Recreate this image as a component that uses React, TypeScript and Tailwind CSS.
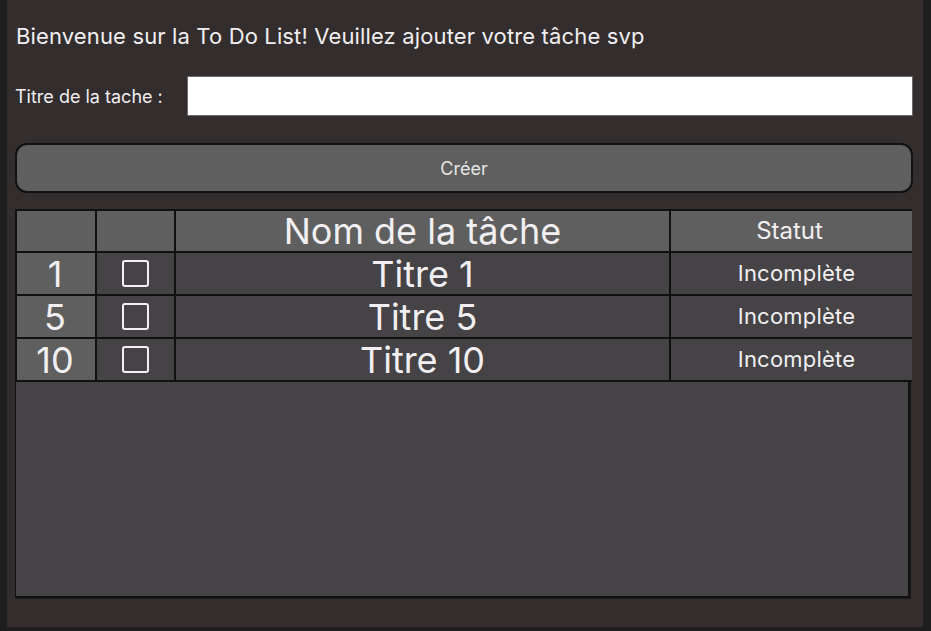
import { useState } from 'react';

type Task = { id: number; title: string; done: boolean };

const initialTasks: Task[] = [
  { id: 1, title: 'Titre 1', done: false },
  { id: 5, title: 'Titre 5', done: false },
  { id: 10, title: 'Titre 10', done: false },
];

export default function App() {
  const [title, setTitle] = useState('');
  const [tasks, setTasks] = useState<Task[]>(initialTasks);

  const toggle = (id: number) =>
    setTasks((prev) => prev.map((t) => (t.id === id ? { ...t, done: !t.done } : t)));

  return (
    <div className="w-[931px] h-[631px] bg-[#1e1e1e] pl-[7px] pr-[8px] pb-[4px] font-['Inter',sans-serif] text-[#f1eff1]">
      <div className="h-full bg-[#332d2d] pl-[8px] pr-[10px] flex flex-col">
        {/* heading */}
        <h1 className="mt-[22px] h-7 leading-7 text-[22px] tracking-[0.14px] pl-[1px]">
          Bienvenue sur la To Do List! Veuillez ajouter votre tâche svp
        </h1>

        {/* title input */}
        <div className="mt-[26px] flex items-center h-10">
          <label className="w-[172px] text-[18px]">Titre de la tache :</label>
          <input
            value={title}
            onChange={(e) => setTitle(e.target.value)}
            className="flex-1 h-10 bg-white border border-[#6a6a6a] text-black px-2 outline-none"
          />
        </div>

        {/* create button */}
        <button className="mt-[27px] h-[50px] rounded-[12px] bg-[#5f5f5f] border-2 border-[#111] text-[18px] text-[#e6e6e6]">
          Créer
        </button>

        {/* task list */}
        <div className="mt-4 h-[389px] w-[895px] bg-[#464446] border-l border-r-2 border-b-2 border-[#111] shadow-[1px_1px_0_#1a1a1a]">
          <div className="-ml-px w-[897px] bg-[#111] grid grid-cols-[78px_77px_493px_241px] gap-[2px] p-[2px]">
            <div className="h-[40px] bg-[#5f5f5f]" />
            <div className="h-[40px] bg-[#5f5f5f]" />
            <div className="h-[40px] bg-[#5f5f5f] flex items-center justify-center text-[36px]">
              Nom de la tâche
            </div>
            <div className="h-[40px] bg-[#5f5f5f] flex items-center justify-center text-[24px] pr-1">
              Statut
            </div>
            {tasks.map((t) => (
              <Row key={t.id} task={t} onToggle={() => toggle(t.id)} />
            ))}
          </div>
        </div>
      </div>
    </div>
  );
}

function Row({ task, onToggle }: { task: Task; onToggle: () => void }) {
  return (
    <>
      <div className="h-[41px] bg-[#5f5f5f] flex items-center justify-center text-[36px] pr-[2px]">{task.id}</div>
      <div className="h-[41px] bg-[#454345] flex items-center justify-center">
        <button
          onClick={onToggle}
          className="w-[27px] h-[27px] rounded-[3px] border-2 border-[#f5eef5] flex items-center justify-center"
        >
          {task.done && <span className="w-3 h-3 bg-[#f5eef5]" />}
        </button>
      </div>
      <div className="h-[41px] bg-[#454345] flex items-center justify-center text-[36px]">{task.title}</div>
      <div className="h-[41px] bg-[#454345] flex items-center justify-center text-[22px] tracking-[0.2px] pl-[10px]">
        {task.done ? 'Complète' : 'Incomplète'}
      </div>
    </>
  );
}
